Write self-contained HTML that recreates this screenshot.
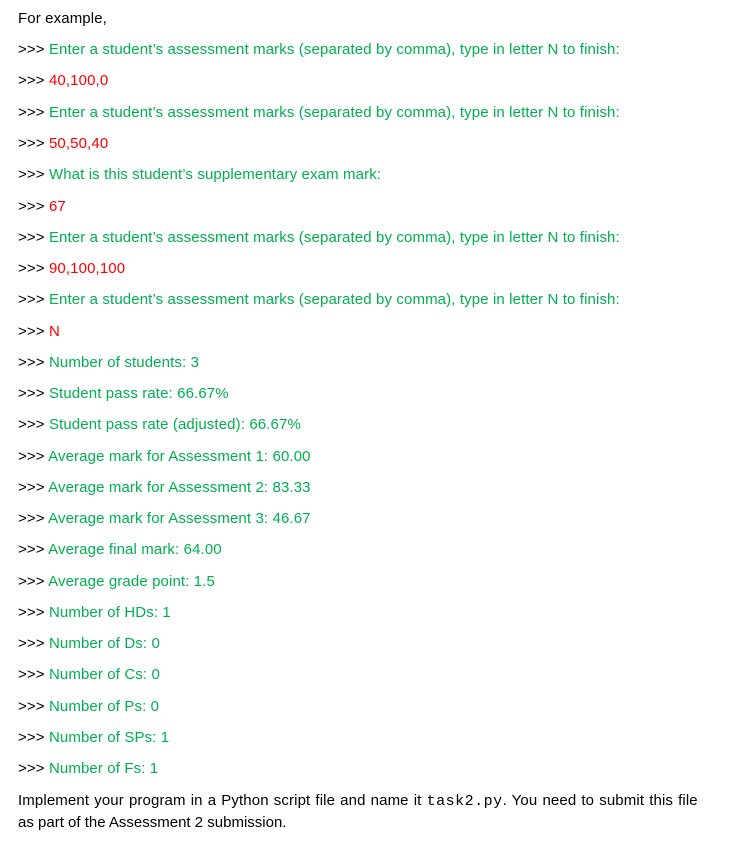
<!DOCTYPE html>
<html><head><meta charset="utf-8"><style>
body{margin:0;background:#fff;width:752px;height:861px;position:relative;font-family:"Liberation Sans",sans-serif;font-size:15px;color:#000;letter-spacing:0.12px}
.l{position:absolute;left:18px;white-space:nowrap;line-height:17px}
.g{color:#00b050}.r{color:#ff0000}
code{font-family:"Liberation Mono",monospace;font-size:15px;letter-spacing:0.5px}
</style></head><body>
<div class="l" style="top:10px">For example,</div>
<div class="l" style="top:41px">&gt;&gt;&gt; <span class="g">Enter a student’s assessment marks (separated by comma), type in letter N to finish:</span></div>
<div class="l" style="top:72px">&gt;&gt;&gt; <span class="r">40,100,0</span></div>
<div class="l" style="top:104px">&gt;&gt;&gt; <span class="g">Enter a student’s assessment marks (separated by comma), type in letter N to finish:</span></div>
<div class="l" style="top:135px">&gt;&gt;&gt; <span class="r">50,50,40</span></div>
<div class="l" style="top:166px">&gt;&gt;&gt; <span class="g">What is this student’s supplementary exam mark:</span></div>
<div class="l" style="top:198px">&gt;&gt;&gt; <span class="r">67</span></div>
<div class="l" style="top:229px">&gt;&gt;&gt; <span class="g">Enter a student’s assessment marks (separated by comma), type in letter N to finish:</span></div>
<div class="l" style="top:260px">&gt;&gt;&gt; <span class="r">90,100,100</span></div>
<div class="l" style="top:291px">&gt;&gt;&gt; <span class="g">Enter a student’s assessment marks (separated by comma), type in letter N to finish:</span></div>
<div class="l" style="top:323px">&gt;&gt;&gt; <span class="r">N</span></div>
<div class="l" style="top:354px">&gt;&gt;&gt; <span class="g">Number of students: 3</span></div>
<div class="l" style="top:385px">&gt;&gt;&gt; <span class="g">Student pass rate: 66.67%</span></div>
<div class="l" style="top:416px">&gt;&gt;&gt; <span class="g">Student pass rate (adjusted): 66.67%</span></div>
<div class="l" style="top:448px">&gt;&gt;&gt; <span class="g">Average mark for Assessment 1: 60.00</span></div>
<div class="l" style="top:479px">&gt;&gt;&gt; <span class="g">Average mark for Assessment 2: 83.33</span></div>
<div class="l" style="top:510px">&gt;&gt;&gt; <span class="g">Average mark for Assessment 3: 46.67</span></div>
<div class="l" style="top:541px">&gt;&gt;&gt; <span class="g">Average final mark: 64.00</span></div>
<div class="l" style="top:573px">&gt;&gt;&gt; <span class="g">Average grade point: 1.5</span></div>
<div class="l" style="top:604px">&gt;&gt;&gt; <span class="g">Number of HDs: 1</span></div>
<div class="l" style="top:635px">&gt;&gt;&gt; <span class="g">Number of Ds: 0</span></div>
<div class="l" style="top:666px">&gt;&gt;&gt; <span class="g">Number of Cs: 0</span></div>
<div class="l" style="top:698px">&gt;&gt;&gt; <span class="g">Number of Ps: 0</span></div>
<div class="l" style="top:729px">&gt;&gt;&gt; <span class="g">Number of SPs: 1</span></div>
<div class="l" style="top:760px">&gt;&gt;&gt; <span class="g">Number of Fs: 1</span></div>
<div class="l" style="top:792px;word-spacing:0.8px">Implement your program in a Python script file and name it <code>task2.py</code>. You need to submit this file</div>
<div class="l" style="top:814px;letter-spacing:0">as part of the Assessment 2 submission.</div>
</body></html>
